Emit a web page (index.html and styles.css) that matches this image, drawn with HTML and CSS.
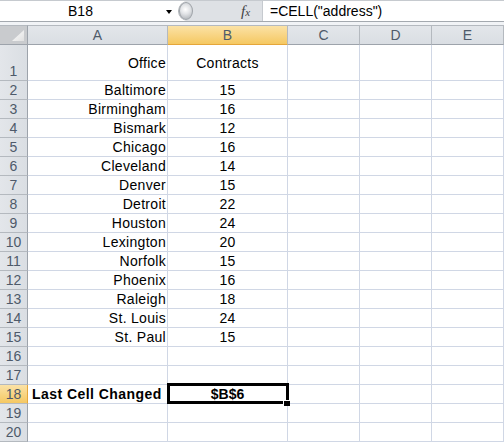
FILE: index.html
```
<!DOCTYPE html>
<html>
<head>
<meta charset="utf-8">
<link rel="stylesheet" href="styles.css">
</head>
<body>
<div class="fbar">
  <div class="namebox"><span class="name">B18</span><span class="arrow"></span></div>
  <div class="fxzone"><span class="grip"></span><span class="fx">f<span class="fxs">x</span></span></div>
  <div class="formula">=CELL("address")</div>
</div>
<div class="gap"></div>
<div class="sheet">
  <div class="h corner"></div><div class="h">A</div><div class="h hsel">B</div><div class="h">C</div><div class="h">D</div><div class="h">E</div>

  <div class="rh rh1">1</div><div class="c r">Office</div><div class="c m">Contracts</div><div class="c"></div><div class="c"></div><div class="c"></div>
  <div class="rh">2</div><div class="c r">Baltimore</div><div class="c m">15</div><div class="c"></div><div class="c"></div><div class="c"></div>
  <div class="rh">3</div><div class="c r">Birmingham</div><div class="c m">16</div><div class="c"></div><div class="c"></div><div class="c"></div>
  <div class="rh">4</div><div class="c r">Bismark</div><div class="c m">12</div><div class="c"></div><div class="c"></div><div class="c"></div>
  <div class="rh">5</div><div class="c r">Chicago</div><div class="c m">16</div><div class="c"></div><div class="c"></div><div class="c"></div>
  <div class="rh">6</div><div class="c r">Cleveland</div><div class="c m">14</div><div class="c"></div><div class="c"></div><div class="c"></div>
  <div class="rh">7</div><div class="c r">Denver</div><div class="c m">15</div><div class="c"></div><div class="c"></div><div class="c"></div>
  <div class="rh">8</div><div class="c r">Detroit</div><div class="c m">22</div><div class="c"></div><div class="c"></div><div class="c"></div>
  <div class="rh">9</div><div class="c r">Houston</div><div class="c m">24</div><div class="c"></div><div class="c"></div><div class="c"></div>
  <div class="rh">10</div><div class="c r">Lexington</div><div class="c m">20</div><div class="c"></div><div class="c"></div><div class="c"></div>
  <div class="rh">11</div><div class="c r">Norfolk</div><div class="c m">15</div><div class="c"></div><div class="c"></div><div class="c"></div>
  <div class="rh">12</div><div class="c r">Phoenix</div><div class="c m">16</div><div class="c"></div><div class="c"></div><div class="c"></div>
  <div class="rh">13</div><div class="c r">Raleigh</div><div class="c m">18</div><div class="c"></div><div class="c"></div><div class="c"></div>
  <div class="rh">14</div><div class="c r">St. Louis</div><div class="c m">24</div><div class="c"></div><div class="c"></div><div class="c"></div>
  <div class="rh">15</div><div class="c r">St. Paul</div><div class="c m">15</div><div class="c"></div><div class="c"></div><div class="c"></div>
  <div class="rh">16</div><div class="c"></div><div class="c"></div><div class="c"></div><div class="c"></div><div class="c"></div>
  <div class="rh">17</div><div class="c"></div><div class="c"></div><div class="c"></div><div class="c"></div><div class="c"></div>
  <div class="rh rhsel">18</div><div class="c b l">Last Cell Changed</div><div class="c b m active">$B$6<span class="selbox"><span class="handle"></span></span></div><div class="c"></div><div class="c"></div><div class="c"></div>
  <div class="rh">19</div><div class="c"></div><div class="c"></div><div class="c"></div><div class="c"></div><div class="c"></div>
  <div class="rh">20</div><div class="c"></div><div class="c"></div><div class="c"></div><div class="c"></div><div class="c"></div>
</div>
</body>
</html>
```

FILE: styles.css
```
* { box-sizing: border-box; }
html, body { margin: 0; padding: 0; background: #fff; overflow: hidden; }
body { width: 504px; height: 443px; font-family: "Liberation Sans", Arial, sans-serif; color: #000; }

.fbar {
  display: flex;
  height: 22px;
  border-top: 1px solid #c6cacf;
  border-bottom: 1px solid #a4a9af;
  background: #fff;
}
.namebox {
  width: 178px;
  display: flex;
  align-items: center;
  background: #fff;
}
.name {
  width: 161px;
  text-align: center;
  font-size: 14px;
  line-height: 20px;
}
.arrow {
  width: 0; height: 0;
  margin-left: 5px;
  margin-top: 1px;
  border-top: 4px solid #000;
  border-left: 3px solid transparent;
  border-right: 3px solid transparent;
}
.fxzone {
  width: 84px;
  display: flex;
  align-items: center;
  background: #dee1e5;
  border-radius: 10px 0 0 10px;
  border-left: 1px solid #aeb2b7;
}
.grip {
  width: 14px; height: 18px;
  border-radius: 50%;
  background: radial-gradient(circle at 45% 40%, #ffffff 0%, #e2e4e7 40%, #b4b8bd 85%, #9ea2a7 100%);
  border: 1px solid #9fa4a9;
}
.fx {
  margin-left: 48px;
  font-family: "Liberation Serif", serif;
  font-style: italic;
  font-size: 15px;
  color: #3f3f3f;
  line-height: 16px;
}
.fxs { font-size: 11px; }
.formula {
  flex: 1;
  border-left: 1px solid #c6cacf;
  padding-left: 7px;
  font-size: 14px;
  line-height: 20px;
  background: #fff;
}
.gap { height: 3px; background: #f1f3f6; }

.sheet {
  display: grid;
  grid-template-columns: 28px 140px 120px 72px 72px 72px;
  grid-template-rows: 20px 36px repeat(19, 19px);
}
.h {
  background: linear-gradient(#e3e6ea, #dadee3);
  color: #4e5a6a;
  font-size: 14px;
  display: flex;
  align-items: center;
  justify-content: center;
  border-top: 1px solid #b4b9bf;
  border-right: 1px solid #b4b9bf;
  border-bottom: 1px solid #9da3ab;
}
.hsel { background: linear-gradient(#fbe2a6, #f5c862); border-bottom-color: #e5a63a; }
.corner { position: relative; background: #c9cbce; border-right-color: #9da3ab; }
.corner::after {
  content: "";
  position: absolute;
  right: 3px; bottom: 3px;
  width: 12px; height: 11px;
  clip-path: polygon(100% 0, 100% 100%, 0 100%);
  background: linear-gradient(135deg, #ffffff, #e0e0e0);
}
.rh {
  background: linear-gradient(90deg, #e3e6ea, #dadee3);
  color: #4e5a6a;
  font-size: 14px;
  display: flex;
  align-items: center;
  justify-content: center;
  border-right: 1px solid #9da3ab;
  border-bottom: 1px solid #b4b9bf;
}
.rh1 { align-items: flex-end; line-height: 18px; }
.rhsel { background: linear-gradient(#fbe2a6, #f5c862); border-right-color: #e5a63a; }
.c {
  border-right: 1px solid #d0d7e5;
  border-bottom: 1px solid #d0d7e5;
  display: flex;
  align-items: center;
  font-size: 14px;
  letter-spacing: 0.3px;
  white-space: nowrap;
}
.r { justify-content: flex-end; padding-right: 1px; }
.m { justify-content: center; }
.b { font-weight: bold; letter-spacing: 0; }
.l { justify-content: flex-start; padding-left: 4px; letter-spacing: 0.45px; }
.active { position: relative; }
.selbox {
  position: absolute;
  left: -1px; top: -2px; right: -2px; bottom: -1px;
  border: 3px solid #000;
}
.handle {
  position: absolute;
  right: -4px; bottom: -5px;
  width: 7px; height: 6px;
  background: #000;
  border-top: 1px solid #fff;
  border-left: 1px solid #fff;
}
```
